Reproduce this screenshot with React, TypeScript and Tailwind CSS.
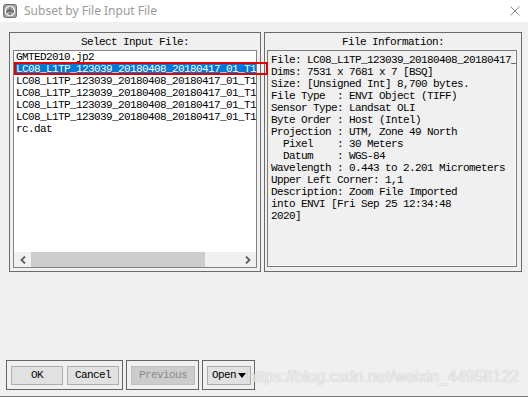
import React from "react"

const mono = "font-['Liberation_Mono',monospace] text-[11px] tracking-[-0.6px] leading-[12px]"

const files = [
    "GMTED2010.jp2",
    "LC08_L1TP_123039_20180408_20180417_01_T1_B1",
    "LC08_L1TP_123039_20180408_20180417_01_T1_B2",
    "LC08_L1TP_123039_20180408_20180417_01_T1_B3",
    "LC08_L1TP_123039_20180408_20180417_01_T1_B4",
    "LC08_L1TP_123039_20180408_20180417_01_T1_B5",
    "rc.dat",
]

const info = [
    "File: LC08_L1TP_123039_20180408_20180417_01_T1",
    "Dims: 7531 x 7681 x 7 [BSQ]",
    "Size: [Unsigned Int] 8,700 bytes.",
    "File Type  : ENVI Object (TIFF)",
    "Sensor Type: Landsat OLI",
    "Byte Order : Host (Intel)",
    "Projection : UTM, Zone 49 North",
    "  Pixel    : 30 Meters",
    "  Datum    : WGS-84",
    "Wavelength : 0.443 to 2.201 Micrometers",
    "Upper Left Corner: 1,1",
    "Description: Zoom File Imported",
    "into ENVI [Fri Sep 25 12:34:48",
    "2020]",
]

function EnviIcon() {
    return (
        <svg width="14" height="14" viewBox="0 0 14 14" className="ml-[3px]">
            <rect x="0.5" y="0.5" width="13" height="13" rx="2" fill="#a3a3a3" stroke="#6f6f6f" />
            <circle cx="7" cy="7" r="4.6" fill="none" stroke="#ffffff" strokeWidth="1.2" />
            <path d="M3.2 8.2 Q7 4.2 10.8 8.2" fill="none" stroke="#4f4f4f" strokeWidth="1.1" />
            <path d="M7 2.4 L7 11.6" stroke="#5c5c5c" strokeWidth="0.8" />
        </svg>
    )
}

function Chevron({ dir }: { dir: "left" | "right" }) {
    return (
        <svg width="6" height="8" viewBox="0 0 6 8">
            <path
                d={dir === "left" ? "M5 0.5 L1.5 4 L5 7.5" : "M1 0.5 L4.5 4 L1 7.5"}
                fill="none"
                stroke="#606060"
                strokeWidth="1.8"
            />
        </svg>
    )
}

export default function App() {
    return (
        <div className="relative w-[528px] h-[397px] bg-[#f0f0f0] overflow-hidden flex flex-col border-b border-[#7a7a7a]">
            {/* title bar */}
            <div className="h-[22px] shrink-0 bg-white flex items-center">
                <EnviIcon />
                <span className="ml-[7px] text-[12px] text-[#9a9a9a] font-['Noto_Sans',sans-serif] leading-none">
                    Subset by File Input File
                </span>
                <svg width="10" height="10" viewBox="0 0 10 10" className="ml-auto mr-[8px]">
                    <path d="M0.5 0.5 L9.5 9.5 M9.5 0.5 L0.5 9.5" stroke="#8a8a8a" strokeWidth="1" />
                </svg>
            </div>

            {/* panels */}
            <div className="flex mt-[10px] ml-[9px] gap-[3px]">
                <div className="w-[252px] h-[240px] border border-[#6b6b6b] flex flex-col">
                    <div className={`h-[17px] pt-[3px] text-center text-black ${mono}`}>Select Input File:</div>
                    <div className="mx-[3px] mb-[3px] flex-1 border border-[#828282] bg-white flex flex-col overflow-hidden">
                        <div className="flex-1 overflow-hidden">
                            {files.map((f, i) => (
                                <div
                                    key={i}
                                    className={`h-[12px] pl-[2px] whitespace-pre overflow-hidden ${mono} ${i === 1 ? "bg-[#0078d7] text-white" : "text-black"}`}
                                >
                                    {f}
                                </div>
                            ))}
                        </div>
                        <div className="h-[15px] shrink-0 flex bg-[#f0f0f0]">
                            <div className="w-[17px] flex items-center justify-center">
                                <Chevron dir="left" />
                            </div>
                            <div className="flex-1 flex">
                                <div className="w-[174px] bg-[#cdcdcd]" />
                            </div>
                            <div className="w-[17px] flex items-center justify-center">
                                <Chevron dir="right" />
                            </div>
                        </div>
                    </div>
                </div>

                <div className="w-[258px] h-[240px] border border-[#6b6b6b] flex flex-col">
                    <div className={`h-[17px] pt-[3px] text-center text-black ${mono}`}>File Information:</div>
                    <div className="ml-[2px] mr-[4px] mb-[4px] flex-1 border border-[#7a7a7a] shadow-[inset_-1px_-1px_0_#ffffff] pt-[3px] pl-[3px] overflow-hidden">
                        {info.map((line, i) => (
                            <div key={i} className={`h-[12px] whitespace-pre text-black ${mono}`}>
                                {line}
                            </div>
                        ))}
                    </div>
                </div>
            </div>

            {/* buttons */}
            <div className="flex mt-[88px] ml-[6px] gap-[3px]">
                <div className="w-[117px] h-[30px] border border-[#656565] flex items-center pl-[4px] gap-[4px]">
                    <button className={`w-[52px] h-[19px] bg-[#e1e1e1] border border-[#adadad] text-black ${mono}`}>OK</button>
                    <button className={`w-[52px] h-[19px] bg-[#e1e1e1] border border-[#adadad] text-black ${mono}`}>Cancel</button>
                </div>
                <div className="w-[73px] h-[30px] border border-[#656565] flex items-center pl-[4px]">
                    <button className={`w-[64px] h-[19px] bg-[#cccccc] border border-[#bfbfbf] text-[#8b8b8b] ${mono}`}>Previous</button>
                </div>
                <div className="w-[53px] h-[30px] border border-[#656565] flex items-center pl-[4px]">
                    <button className={`w-[44px] h-[19px] bg-[#e1e1e1] border border-[#adadad] text-black flex items-center justify-center gap-[2px] ${mono}`}>
                        <span>Open</span>
                        <svg width="8" height="5" viewBox="0 0 8 5">
                            <path d="M0 0 L8 0 L4 5 Z" fill="#000000" />
                        </svg>
                    </button>
                </div>
            </div>

            {/* selection annotation */}
            <div className="absolute left-[14px] top-[62px] w-[254px] h-[13px] border-2 border-[#e00000]" />

            {/* watermark */}
            <div className="absolute left-[247px] top-[368px] text-[16px] leading-[18px] font-['Liberation_Sans',sans-serif] text-white/80 [text-shadow:0_0_1px_rgba(0,0,0,0.35)] whitespace-nowrap">
                https://blog.csdn.net/weixin_44958122
            </div>
        </div>
    )
}
